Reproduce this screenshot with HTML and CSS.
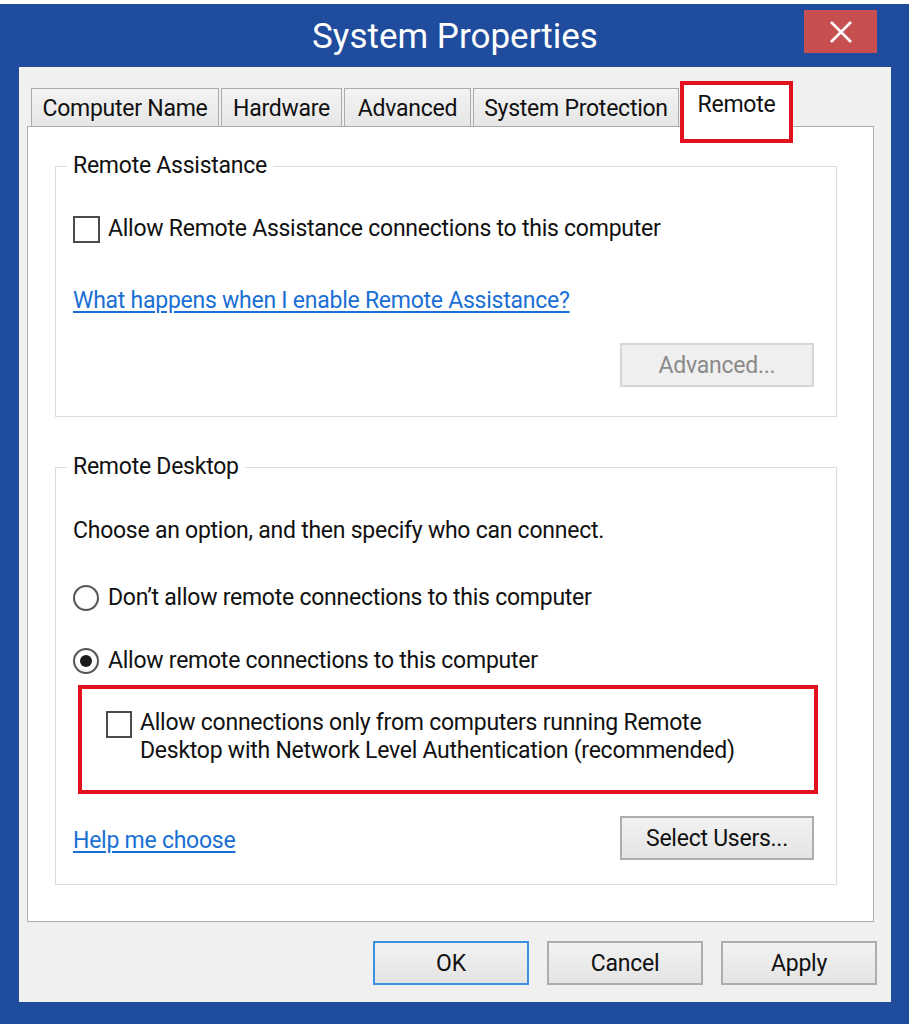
FILE: index.html
```html
<!DOCTYPE html>
<html lang="en">
<head>
<meta charset="utf-8">
<title>System Properties</title>
<link rel="stylesheet" href="styles.css">
</head>
<body>
<div class="window">
  <div class="titlebar">
    <span class="spacer"></span>
    <h1 class="title">System Properties</h1>
    <div class="close">
      <svg width="24" height="24" viewBox="0 0 24 24"><path d="M2 2 L22 22 M22 2 L2 22" stroke="#fff" stroke-width="2.6" fill="none"/></svg>
    </div>
  </div>
  <div class="dialog">
    <div class="tabs">
      <div class="tab tab-name">Computer Name</div>
      <div class="tab tab-hw">Hardware</div>
      <div class="tab tab-adv">Advanced</div>
      <div class="tab tab-sp">System Protection</div>
      <div class="tab tab-remote active">Remote</div>
    </div>
    <div class="panel">
      <fieldset class="group group-ra">
        <legend>Remote Assistance</legend>
        <div class="option opt-ra"><span class="check"></span><span>Allow Remote Assistance connections to this computer</span></div>
        <a class="link link-ra">What happens when I enable Remote Assistance?</a>
        <div class="btnrow"><span class="btn disabled">Advanced...</span></div>
      </fieldset>
      <fieldset class="group group-rd">
        <legend>Remote Desktop</legend>
        <p class="intro">Choose an option, and then specify who can connect.</p>
        <div class="option opt-r1"><span class="radio"></span><span>Don’t allow remote connections to this computer</span></div>
        <div class="option opt-r2"><span class="radio on"></span><span>Allow remote connections to this computer</span></div>
        <div class="highlight">
          <span class="check check-nla"></span>
          <span class="nla-text">Allow connections only from computers running Remote<br>Desktop with Network Level Authentication (recommended)</span>
        </div>
        <div class="helprow">
          <a class="link link-help">Help me choose</a>
          <span class="btn">Select Users...</span>
        </div>
      </fieldset>
    </div>
    <div class="footer">
      <span class="btn fbtn default">OK</span>
      <span class="btn fbtn">Cancel</span>
      <span class="btn fbtn">Apply</span>
    </div>
  </div>
</div>
</body>
</html>
```

FILE: styles.css
```css
* { box-sizing: border-box; }

html, body {
  margin: 0;
  padding: 0;
  background: #ffffff;
}

body {
  font-family: Roboto, "Noto Sans", sans-serif;
  font-size: 23px;
  letter-spacing: -0.25px;
  color: #111;
}

.window {
  margin-top: 4px;
  height: 1020px;
  background: #1f4c9d;
  padding: 0 18px 22px 19px;
}

.titlebar {
  height: 63px;
  display: grid;
  grid-template-columns: 1fr auto 1fr;
  align-items: start;
}

.title {
  margin: 12px 0 0;
  font-weight: 400;
  font-size: 35px;
  line-height: 42px;
  color: #ffffff;
  letter-spacing: 0;
}

.close {
  justify-self: end;
  margin: 6px 14px 0 0;
  width: 73px;
  height: 43px;
  background: #c74f4f;
  display: flex;
  align-items: center;
  justify-content: center;
}

.close svg { display: block; }

.dialog {
  height: 935px;
  background: #f0f0f0;
  padding: 15px 17px 0 8px;
}

.tabs {
  display: flex;
  align-items: flex-end;
  height: 44px;
  padding-left: 4px;
  gap: 2px;
  position: relative;
  z-index: 1;
}

.tab {
  flex: none;
  height: 38px;
  border: 1px solid #acacac;
  border-bottom: none;
  background: linear-gradient(#f3f3f3, #e6e6e6);
  text-align: center;
  line-height: 39px;
  white-space: nowrap;
}

.tab-name { width: 188px; }
.tab-hw { width: 121px; }
.tab-adv { width: 127px; }
.tab-sp { width: 206px; }

.tab-remote {
  width: 107px;
  height: 45px;
  margin-left: 2px;
  margin-bottom: -1px;
  background: #ffffff;
  line-height: 43px;
  position: relative;
}

.tab-remote::after {
  content: "";
  position: absolute;
  left: -4px;
  right: -4px;
  top: -2px;
  bottom: -16px;
  border: 4px solid #e3101d;
}

.panel {
  height: 796px;
  background: #ffffff;
  border: 1px solid #adadad;
  padding: 25px 36px 0 27px;
}

.group {
  margin: 0;
  min-width: 0;
  border: 1px solid #dcdcdc;
  padding: 0 22px 29px 17px;
}

.group legend {
  padding: 0 6px;
  margin-left: -6px;
  line-height: 28px;
}

.group-rd {
  margin-top: 36px;
  padding-bottom: 24px;
}

.option {
  display: flex;
  align-items: center;
  line-height: 28px;
  white-space: nowrap;
}

.opt-ra { margin-top: 35px; }

.check {
  flex: none;
  width: 27px;
  height: 27px;
  border: 2px solid #4b4b4b;
  background: #ffffff;
  margin-right: 8px;
}

.radio {
  flex: none;
  width: 26px;
  height: 26px;
  border-radius: 50%;
  border: 2px solid #555;
  background: radial-gradient(circle, #ffffff 55%, #e8e8e8 100%);
  margin-right: 9px;
  display: flex;
  align-items: center;
  justify-content: center;
}

.radio.on::before {
  content: "";
  width: 12px;
  height: 12px;
  border-radius: 50%;
  background: #1b1b1b;
}

.link {
  display: block;
  color: #1a6fd4;
  text-decoration: underline;
  text-underline-offset: 3px;
  line-height: 28px;
  cursor: pointer;
  white-space: nowrap;
}

.link-ra { margin-top: 44px; width: max-content; }

.btnrow {
  display: flex;
  justify-content: flex-end;
  margin-top: 28px;
}

.btn {
  display: flex;
  align-items: center;
  justify-content: center;
  width: 194px;
  height: 44px;
  border: 2px solid #adadad;
  background: linear-gradient(#f2f2f2, #e4e4e4);
  color: #111;
  white-space: nowrap;
}

.btn.disabled {
  border-color: #d6d6d6;
  background: #efefef;
  color: #8a8a8a;
}

.intro {
  margin: 36px 0 0;
  line-height: 28px;
  white-space: nowrap;
}

.opt-r1 { margin-top: 39px; }
.opt-r2 { margin-top: 35px; }

.highlight {
  margin: 10px -4px 0 5px;
  border: 4px solid #e3101d;
  padding: 20px 10px 25px 24px;
  display: flex;
  align-items: flex-start;
}

.check-nla {
  width: 26px;
  height: 27px;
  margin-top: 2px;
  margin-right: 8px;
}

.nla-text {
  line-height: 28px;
  white-space: nowrap;
}

.helprow {
  margin-top: 22px;
  display: flex;
  justify-content: space-between;
  align-items: center;
}

.link-help { margin-top: 6px; }

.footer {
  margin: 19px -3px 0 0;
  display: flex;
  justify-content: flex-end;
  gap: 18px;
}

.fbtn {
  width: 156px;
  height: 44px;
}

.fbtn.default {
  border-color: #3f8fe0;
}
```
